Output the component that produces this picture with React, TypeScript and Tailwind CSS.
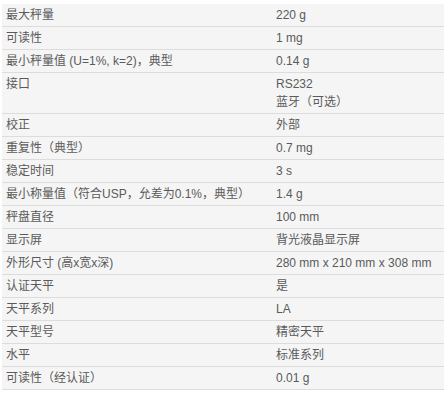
const specs: [string, string[]][] = [
  ['最大秤量', ['220 g']],
  ['可读性', ['1 mg']],
  ['最小秤量值 (U=1%, k=2)，典型', ['0.14 g']],
  ['接口', ['RS232', '蓝牙（可选）']],
  ['校正', ['外部']],
  ['重复性（典型）', ['0.7 mg']],
  ['稳定时间', ['3 s']],
  ['最小称量值（符合USP，允差为0.1%，典型）', ['1.4 g']],
  ['秤盘直径', ['100 mm']],
  ['显示屏', ['背光液晶显示屏']],
  ['外形尺寸 (高x宽x深)', ['280 mm x 210 mm x 308 mm']],
  ['认证天平', ['是']],
  ['天平系列', ['LA']],
  ['天平型号', ['精密天平']],
  ['水平', ['标准系列']],
  ['可读性（经认证）', ['0.01 g']],
]

export default function App() {
  return (
    <div className="bg-white pt-1 pl-[2px] w-[448px] h-[393px]">
      <div
        className="w-[442px] bg-[#f5f5f5] text-[12px] leading-[18px] text-[#5a5a5a]"
        style={{ fontFamily: '"Liberation Sans", Arial, "Noto Sans CJK SC", sans-serif' }}
      >
        {specs.map(([label, values]) => (
          <div key={label} className="flex border-b border-[#dcdcdc]">
            <div className="w-[270px] shrink-0 px-1 py-[2px] whitespace-nowrap">
              <div className="h-[18px]">{label}</div>
            </div>
            <div className="px-1 py-[2px]">
              {values.map((v) => (
                <div key={v} className="h-[18px]">{v}</div>
              ))}
            </div>
          </div>
        ))}
      </div>
    </div>
  )
}
